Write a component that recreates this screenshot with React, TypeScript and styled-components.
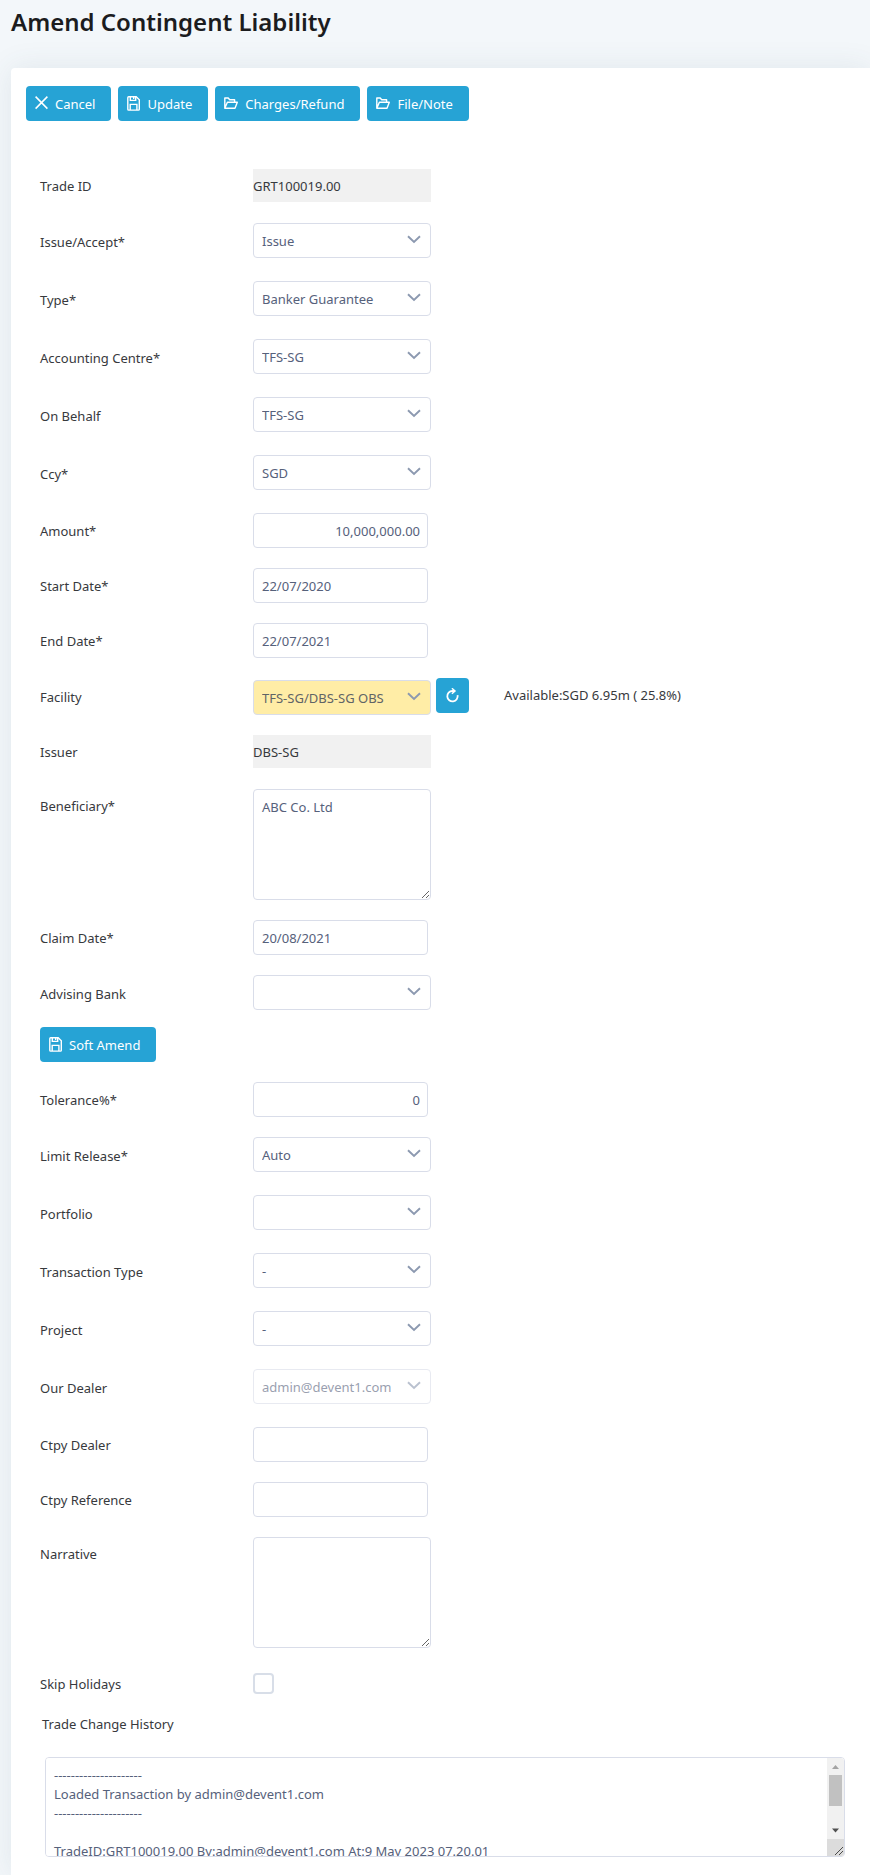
import React, { useId } from "react";
import styled, { createGlobalStyle, css } from "styled-components";

const fontStack = `"Noto Sans", "Open Sans", "Liberation Sans", sans-serif`;

const GlobalStyle = createGlobalStyle`
  *, *::before, *::after { box-sizing: border-box; }
  body {
    margin: 0;
    background: #f3f7fa;
    color: #37393d;
    font: 400 13px/20px ${fontStack};
  }
  button, input, select, textarea { font: inherit; margin: 0; }
`;

const Page = styled.main`
  padding-left: 11px;
  overflow: hidden;
`;

const Title = styled.h1`
  margin: 0;
  height: 68px;
  padding-top: 6px;
  font-size: 24px;
  font-weight: 600;
  line-height: 32px;
  color: #1b1c1e;
`;

const Card = styled.section`
  background: #fff;
  border-radius: 4px 0 0 0;
  box-shadow: 0 0 30px rgba(60, 85, 105, 0.1);
  padding-bottom: 18px;
`;

const Toolbar = styled.div`
  display: flex;
  flex-wrap: wrap;
  gap: 7px;
  padding: 18px 15px 48px;
`;

const Button = styled.button<{ $square?: boolean }>`
  display: inline-flex;
  align-items: center;
  justify-content: ${(p) => (p.$square ? "center" : "flex-start")};
  gap: 7px;
  height: 35px;
  width: ${(p) => (p.$square ? "33px" : "auto")};
  padding: ${(p) => (p.$square ? "0" : "0 16px 0 9px")};
  border: 0;
  border-radius: 4px;
  background: #26a3d5;
  color: #fff;
  cursor: pointer;

  svg { flex: none; }
`;

const Fields = styled.div`
  display: grid;
  gap: 20px;
  padding: 0 25px 0 29px;
`;

const rowHeights = { static: "34px", input: "35px", select: "38px", facility: "37px", area: "111px", check: "31px" };
type RowKind = keyof typeof rowHeights;

const Row = styled.div<{ $kind: RowKind }>`
  display: grid;
  grid-template-columns: 213px 1fr;
  min-height: ${(p) => rowHeights[p.$kind]};
`;

const Label = styled.label<{ $top?: boolean }>`
  align-self: ${(p) => (p.$top ? "start" : "center")};
  line-height: ${(p) => (p.$top ? "34px" : "20px")};
`;

const control = css`
  display: block;
  border: 1px solid #d9dde9;
  border-radius: 4px;
  background: #fff;
  color: #56617b;
  outline: none;
  &:focus { border-color: #26a3d5; }
`;

const TextInput = styled.input<{ $numeric?: boolean }>`
  ${control}
  width: 175px;
  height: 35px;
  padding: 0 7px 0 8px;
  text-align: ${(p) => (p.$numeric ? "right" : "left")};
`;

const ReadOnly = styled.output`
  width: 178px;
  height: 33px;
  line-height: 34px;
  background: #f1f1f1;
`;

const Area = styled.textarea`
  ${control}
  width: 178px;
  height: 111px;
  padding: 8px;
  line-height: 19px;
`;

const SelectBox = styled.div`
  position: relative;
  width: 178px;
  height: 35px;

  svg {
    position: absolute;
    right: 10px;
    top: 12px;
    pointer-events: none;
  }
  &:has(select:disabled) { opacity: 0.6; }
`;

const NativeSelect = styled.select<{ $tinted?: boolean }>`
  ${control}
  appearance: none;
  width: 100%;
  height: 100%;
  padding: 0 28px 0 8px;
  ${(p) => p.$tinted && "background: #ffeda6; color: #5f6466;"}
  &:disabled { opacity: 1; }
`;

const FacilityFields = styled.div`
  display: flex;
  align-items: flex-start;
  gap: 5px;
  ${SelectBox} { margin-top: 2px; }
`;

const Availability = styled.span`
  margin-left: 30px;
  line-height: 35px;
`;

const Checkbox = styled.input`
  appearance: none;
  align-self: center;
  width: 21px;
  height: 21px;
  border: 2px solid #d8dee8;
  border-radius: 4px;
  background: #fff;
  &:checked { background: #26a3d5; }
`;

const Actions = styled.div`
  display: flex;
  padding: 14px 25px 20px 29px;
`;

const History = styled.div`
  display: flex;
  flex-direction: column;
  gap: 23px;
  padding: 15px 25px 0 31px;

  ${Label} { align-self: flex-start; }
`;

const HistoryBox = styled.div`
  position: relative;
  height: 100px;
  margin-left: 3px;
`;

const HistoryArea = styled.textarea`
  ${control}
  width: 100%;
  height: 100%;
  padding: 8px 25px 8px 8px;
  line-height: 19px;
  resize: none;
  overflow-y: scroll;
  scrollbar-width: none;
`;

const ScrollRail = styled.div`
  position: absolute;
  top: 1px;
  right: 1px;
  bottom: 1px;
  width: 17px;
  display: flex;
  flex-direction: column;
  align-items: center;
  background: #f1f1f1;
  border-radius: 0 3px 3px 0;
  overflow: hidden;
  pointer-events: none;

  svg { display: block; flex: none; }
`;

const Thumb = styled.div`
  width: 13px;
  height: 31px;
  margin-bottom: 16px;
  background: #c1c1c1;
`;

const Chevron = () => (
  <svg width="14" height="9" viewBox="0 0 14 9" fill="none" stroke="#8c99b0" strokeWidth="1.9" aria-hidden="true">
    <path d="M1 1.2 7 7l6-5.8" />
  </svg>
);

const CloseIcon = () => (
  <svg width="13" height="15" viewBox="0 0 13 15" fill="none" stroke="currentColor" strokeWidth="1.5" aria-hidden="true">
    <path d="M.6.6l11.8 12M12.4.6.6 12.6" />
  </svg>
);

const SaveIcon = () => (
  <svg width="13" height="16" viewBox="0 0 13 16" fill="none" stroke="currentColor" strokeWidth="1.4" aria-hidden="true">
    <path d="M1.7.8h7.5l3.1 3v9.4q0 .9-.9.9H1.7q-.9 0-.9-.9V1.7q0-.9.9-.9z" />
    <path d="M3.3.8v3.6h5.4V.8M6.7 1v2M3.200 14V8.400h6.700V14" />
  </svg>
);

const FolderIcon = () => (
  <svg width="14" height="14" viewBox="0 0 14 14" fill="none" stroke="currentColor" strokeWidth="1.4" strokeLinejoin="round" aria-hidden="true">
    <path d="M.8 11.3V1h3.400l1.500 1.800h4.900v2.400M.8 11.3 3.400 5.200h9.900L11 11.300z" />
  </svg>
);

const RefreshIcon = () => (
  <svg width="13" height="16" viewBox="0 0 13 16" fill="none" stroke="currentColor" strokeWidth="1.8" aria-hidden="true">
    <path d="M11.6 7.2A5.2 5.2 0 1 1 6.4 3h2.2" />
    <path d="M5.9.3 9 3 5.9 5.8" strokeWidth="1.5" />
  </svg>
);

const ScrollArrow = ({ down }: { down?: boolean }) => (
  <svg width="17" height="17" viewBox="0 0 17 17" fill={down ? "#505050" : "#a3a3a3"} aria-hidden="true">
    <path d={down ? "M5 6.5h7l-3.5 4z" : "M5 11h7L8.5 7z"} />
  </svg>
);

const Grip = () => (
  <svg width="17" height="17" viewBox="0 0 17 17" aria-hidden="true">
    <path d="M0 0h17v17H0z" fill="#dcdcdc" />
    <path d="M8 16l8-8M12 16l4-4" stroke="#4a4a4a" />
  </svg>
);

function SelectControl(props: { id: string; value: string; disabled?: boolean; tinted?: boolean }) {
  return (
    <SelectBox>
      <NativeSelect id={props.id} defaultValue={props.value} disabled={props.disabled} $tinted={props.tinted}>
        <option value={props.value}>{props.value}</option>
      </NativeSelect>
      <Chevron />
    </SelectBox>
  );
}

type FieldProps = { label: string; value?: string };

function StaticField({ label, value }: FieldProps) {
  const id = useId();
  return (
    <Row $kind="static">
      <Label htmlFor={id}>{label}</Label>
      <ReadOnly id={id}>{value}</ReadOnly>
    </Row>
  );
}

function SelectField({ label, value = "", disabled }: FieldProps & { disabled?: boolean }) {
  const id = useId();
  return (
    <Row $kind="select">
      <Label htmlFor={id}>{label}</Label>
      <SelectControl id={id} value={value} disabled={disabled} />
    </Row>
  );
}

function InputField({ label, value = "", numeric }: FieldProps & { numeric?: boolean }) {
  const id = useId();
  return (
    <Row $kind="input">
      <Label htmlFor={id}>{label}</Label>
      <TextInput id={id} type="text" defaultValue={value} $numeric={numeric} />
    </Row>
  );
}

function AreaField({ label, value = "" }: FieldProps) {
  const id = useId();
  return (
    <Row $kind="area">
      <Label htmlFor={id} $top>{label}</Label>
      <Area id={id} defaultValue={value} />
    </Row>
  );
}

const history = [
  "---------------------",
  "Loaded Transaction by admin@devent1.com",
  "---------------------",
  "",
  "TradeID:GRT100019.00 By:admin@devent1.com At:9 May 2023 07.20.01",
  "",
  "",
].join("\n");

export default function App() {
  return (
    <Page>
      <GlobalStyle />
      <Title>Amend Contingent Liability</Title>
      <Card>
        <Toolbar>
          <Button type="button"><CloseIcon />Cancel</Button>
          <Button type="button"><SaveIcon />Update</Button>
          <Button type="button"><FolderIcon />Charges/Refund</Button>
          <Button type="button"><FolderIcon />File/Note</Button>
        </Toolbar>

        <Fields>
          <StaticField label="Trade ID" value="GRT100019.00" />
          <SelectField label="Issue/Accept*" value="Issue" />
          <SelectField label="Type*" value="Banker Guarantee" />
          <SelectField label="Accounting Centre*" value="TFS-SG" />
          <SelectField label="On Behalf" value="TFS-SG" />
          <SelectField label="Ccy*" value="SGD" />
          <InputField label="Amount*" value="10,000,000.00" numeric />
          <InputField label="Start Date*" value="22/07/2020" />
          <InputField label="End Date*" value="22/07/2021" />
          <Row $kind="facility">
            <Label htmlFor="facility">Facility</Label>
            <FacilityFields>
              <SelectControl id="facility" value="TFS-SG/DBS-SG OBS" tinted />
              <Button type="button" $square aria-label="Refresh facility"><RefreshIcon /></Button>
              <Availability>Available:SGD 6.95m ( 25.8%)</Availability>
            </FacilityFields>
          </Row>
          <StaticField label="Issuer" value="DBS-SG" />
          <AreaField label="Beneficiary*" value="ABC Co. Ltd" />
          <InputField label="Claim Date*" value="20/08/2021" />
          <SelectField label="Advising Bank" />
        </Fields>

        <Actions>
          <Button type="button"><SaveIcon />Soft Amend</Button>
        </Actions>

        <Fields>
          <InputField label="Tolerance%*" value="0" numeric />
          <SelectField label="Limit Release*" value="Auto" />
          <SelectField label="Portfolio" />
          <SelectField label="Transaction Type" value="-" />
          <SelectField label="Project" value="-" />
          <SelectField label="Our Dealer" value="admin@devent1.com" disabled />
          <InputField label="Ctpy Dealer" />
          <InputField label="Ctpy Reference" />
          <AreaField label="Narrative" />
          <Row $kind="check">
            <Label htmlFor="skip-holidays">Skip Holidays</Label>
            <Checkbox id="skip-holidays" type="checkbox" />
          </Row>
        </Fields>

        <History>
          <Label htmlFor="history">Trade Change History</Label>
          <HistoryBox>
            <HistoryArea id="history" defaultValue={history} />
            <ScrollRail aria-hidden="true">
              <ScrollArrow />
              <Thumb />
              <ScrollArrow down />
              <Grip />
            </ScrollRail>
          </HistoryBox>
        </History>
      </Card>
    </Page>
  );
}
